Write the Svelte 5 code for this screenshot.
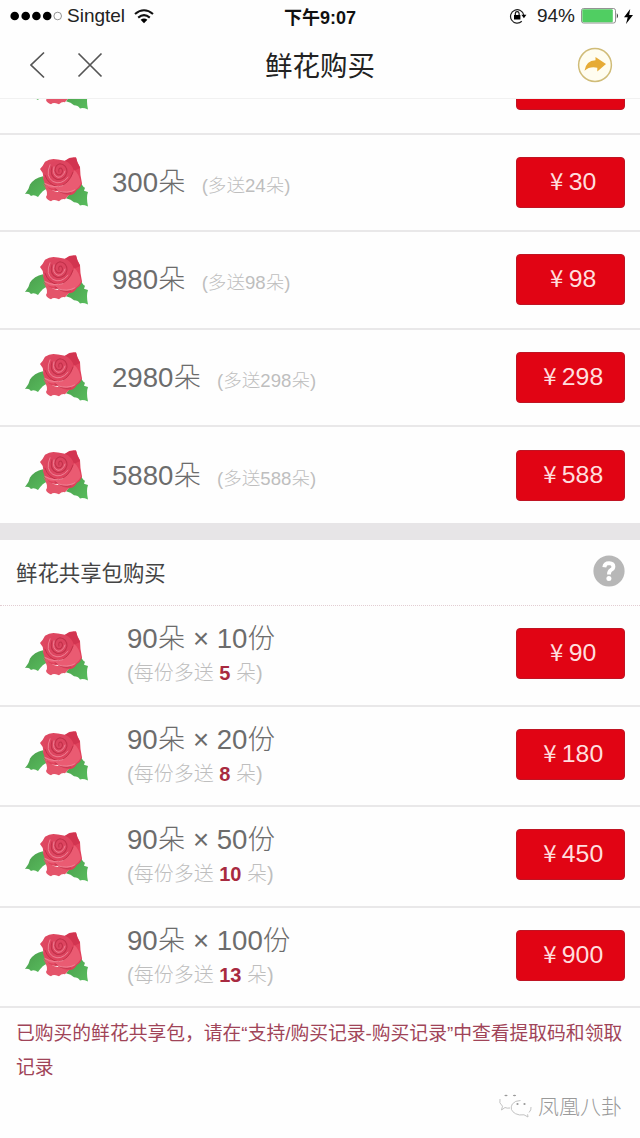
<script>
	const flowers = [
		{ count: 300, extra: 24, price: 30 },
		{ count: 980, extra: 98, price: 98 },
		{ count: 2980, extra: 298, price: 298 },
		{ count: 5880, extra: 588, price: 588 }
	];

	const packs = [
		{ count: 90, shares: 10, extra: 5, price: 90 },
		{ count: 90, shares: 20, extra: 8, price: 180 },
		{ count: 90, shares: 50, extra: 10, price: 450 },
		{ count: 90, shares: 100, extra: 13, price: 900 }
	];
</script>

{#snippet rose()}
	<svg class="rose" viewBox="0 1.5 64 48" preserveAspectRatio="none" width="64" height="50">
		<defs>
			<linearGradient id="petal" x1="0" y1="0" x2="1" y2="1">
				<stop offset="0" stop-color="#dd4a63" />
				<stop offset="1" stop-color="#e23d58" />
			</linearGradient>
			<linearGradient id="leaf" x1="0" y1="0" x2="1" y2="1">
				<stop offset="0" stop-color="#4a9c4c" />
				<stop offset="1" stop-color="#58bd5d" />
			</linearGradient>
		</defs>
		<path fill="url(#leaf)" d="M0 37Q4 33 5 28Q9 22 18 20L22 32Q18 33 13 40Q9 37 6 39Q4 36 0 37Z" />
		<path fill="url(#leaf)" d="M55 24Q58 31 60 31L59 34L63 35Q61 40 63 49Q58 47 55 48Q53 45 49 45Q46 42 41 41L48 33Z" />
		<path
			fill="#e4546a"
			d="M18 27Q24 34 33 35L48 35Q43 38 40 42Q37 41 34 44L31 43Q28 42 26 44Q22 43 21 40Q24 36 18 27Z"
		/>
		<path
			fill="url(#petal)"
			d="M15 13Q18 10 20 6Q26 2 33 4Q38 5 40 5Q45 1 51 2Q52 7 55 11Q55 19 57 27Q55 32 52 33Q49 38 45 38Q38 38 33 34Q23 35 20 28L18 22Q19 17 15 13Z"
		/>
		<path fill="#d23450" d="M40 5Q45 2 51 2Q52 7 55 12L49 15Q47 8 40 5Z" />
		<path fill="#ea5b72" d="M19 26Q29 31 38 28Q47 23 49 14Q54 17 56 27Q53 32 50 33Q47 37 42 37Q34 36 30 32Q22 32 19 26Z" />
		<path fill="#dd4560" d="M21 12Q20 25 33 28Q43 27 47 15Q44 6 36 5Q26 5 21 12Z" />
		<g fill="none" stroke-linecap="round">
			<path stroke="#bd3048" stroke-width=".9" d="M20 19Q23 28 33 30Q44 28 48 16M30 32Q38 38 46 36" />
			<path stroke="#c03049" stroke-width="1" d="M27 11Q24 20 32 23Q40 24 42 16Q42 9 35 8Q30 9 30 15Q32 20 36 18Q39 15 36 12Q33 12 34 16" />
			<path stroke="#f08597" stroke-width=".9" d="M25 9Q20 20 28 25Q36 29 43 21M29 11Q27 19 33 21Q38 21 40 15M20 27Q29 32 38 29M33 34Q42 37 50 33" />
		</g>
	</svg>
{/snippet}

<div class="page">
	<header>
		<div class="status">
			<div class="carrier">
				<svg width="52" height="12" viewBox="0 0 52 12">
					{#each [4.7, 15.7, 26.4, 37.2] as x}
						<circle cx={x} cy="6" r="4.3" />
					{/each}
					<circle cx="47.7" cy="6" r="3.8" fill="none" stroke="#666" stroke-width=".7" />
				</svg>
				<span>Singtel</span>
				<svg class="wifi" width="20" height="15" viewBox="0 0 20 15">
					<g fill="none" stroke="#111" stroke-width="2.1">
						<path d="M1 5Q10 -2.5 19 5" />
						<path d="M4.2 8.6Q10 3.7 15.8 8.6" />
					</g>
					<path d="M6.6 10.8Q10 8 13.4 10.8L10 14.2Z" />
				</svg>
			</div>
			<span class="time">下午9:07</span>
			<div class="power">
				<svg width="18" height="16" viewBox="0 0 18 16">
					<path fill="none" stroke="#222" stroke-width="1.2" d="M12.8 13.3A6.7 6.7 0 1 1 14.8 7" />
					<path d="M12.4 6.8H17.4L14.9 10.2Z" />
					<path d="M5 7H11.4V11.5H5Z" />
					<path fill="none" stroke="#111" stroke-width="1.2" d="M6.3 7V5.5Q6.4 3.7 8.2 3.7T10.1 5.5V7" />
				</svg>
				<span>94%</span>
				<svg width="38" height="16" viewBox="0 0 38 16">
					<rect x=".5" y=".5" width="34" height="14.5" rx="2" fill="#fff" stroke="#777" stroke-width=".8" />
					<rect x="1.3" y="1.3" width="30.5" height="13" rx="1" fill="#50ce62" />
					<path d="M35.8 5Q38 7.8 35.8 10.5Z" fill="#222" />
				</svg>
				<svg class="bolt" width="9" height="15" viewBox="0 0 9 15">
					<path d="M6.2 0L0 8.2H3.7L2 15L9 6H5.2Z" />
				</svg>
			</div>
		</div>
		<nav>
			<div class="back">
				<svg width="16" height="28" viewBox="0 0 16 28">
					<path d="M14 1.5L1 14L14 26.5" />
				</svg>
				<svg width="26" height="26" viewBox="0 0 26 26">
					<path d="M1.5 1.5L24.5 24.5M24.5 1.5L1.5 24.5" />
				</svg>
			</div>
			<h1>鲜花购买</h1>
			<svg class="share" width="36" height="36" viewBox="0 0 36 36">
				<circle cx="18" cy="18" r="16.4" fill="#fffdf0" stroke="#d0bc78" stroke-width="1.5" />
				<path
					fill="#e6ab36"
					d="M18.5 10L29 17L20.3 24.5V20.8Q13 19 7.5 23.7Q9 13.5 18.5 13.2Z"
				/>
			</svg>
		</nav>
	</header>

	<div class="list">
		<!-- row scrolled under the header -->
		<div class="row">
			{@render rose()}
			<button aria-label="购买"></button>
		</div>
		{#each flowers as item}
			<div class="row">
				{@render rose()}
				<div class="single">
					<span class="count">{item.count}朵</span>
					<span class="extra">(多送{item.extra}朵)</span>
				</div>
				<button><span class="yen">¥</span>{item.price}</button>
			</div>
		{/each}
	</div>

	<div class="divider"></div>

	<div class="section">
		<h2>鲜花共享包购买</h2>
		<svg width="32" height="32" viewBox="0 0 32 32">
			<circle cx="16" cy="16" r="15.6" fill="#b7b7b7" />
			<path fill="none" stroke="#fff" stroke-width="3.9" d="M11.3 12.2Q11.7 8.1 16.1 8.1Q20.5 8.3 20.4 11.8Q20.3 14 17.9 15.1Q15.9 16.2 16 19.5" />
			<circle cx="15.9" cy="23.4" r="2.5" fill="#fff" />
		</svg>
	</div>

	<div class="packs">
		{#each packs as pack}
			<div class="row pack">
				{@render rose()}
				<div class="info">
					<div class="count">{pack.count}朵 × {pack.shares}份</div>
					<div class="each">(每份多送 <b>{pack.extra}</b> 朵)</div>
				</div>
				<button><span class="yen">¥</span>{pack.price}</button>
			</div>
		{/each}
	</div>

	<p class="note">已购买的鲜花共享包，请在“支持/购买记录-购买记录”中查看提取码和领取记录</p>

	<div class="watermark">
		<svg width="34" height="26" viewBox="0 0 34 26">
			<g fill="none" stroke="#bbb" stroke-width=".9">
				<path d="M2 7Q.5 11 4.5 14.2L3.5 18L7 15.5Q9 16.5 12 16" />
				<path d="M22.5 8.5Q17 8.5 14.3 12Q11 18 17.5 21.7Q21 23.6 26 22.8L30 25L29.6 22.3M33 15Q33.5 18 31 20.5" />
			</g>
			<g fill="#999">
				<ellipse cx="8" cy="3.5" rx="1.6" ry=".8" />
				<ellipse cx="16.5" cy="3.5" rx="1.6" ry=".8" />
				<circle cx="19.5" cy="12" r="1.1" />
				<circle cx="26.5" cy="12" r="1.1" />
			</g>
		</svg>
		<span>凤凰八卦</span>
	</div>
</div>

<style>
	:global(body) {
		background: #fefefe;
	}

	.page {
		display: flex;
		flex-direction: column;
		width: 640px;
		height: 1138px;
		overflow: hidden;
		background: #fefefe;
		color: #6c6c6c;
		font-family: 'Liberation Sans', 'Noto Sans CJK SC', sans-serif;
	}

	svg {
		flex: none;
		display: block;
	}

	header {
		flex: none;
		box-sizing: border-box;
		height: 99px;
		border-bottom: 1px solid #f1f1f1;
	}

	.status,
	nav {
		display: grid;
		grid-template-columns: 1fr auto 1fr;
		align-items: center;
	}

	.status {
		height: 32px;
		color: #222;
		font-size: 19px;
	}

	.carrier,
	.power {
		display: flex;
		align-items: center;
	}

	.carrier {
		padding-left: 10px;
		gap: 5px;
	}

	.wifi {
		margin-left: 4px;
	}

	.time {
		color: #111;
		font-size: 18px;
		font-weight: bold;
	}

	.power {
		justify-content: flex-end;
		gap: 6px;
		padding-right: 7px;
	}

	.power span {
		margin-left: 4px;
	}

	.bolt {
		margin-left: -1px;
	}

	nav {
		height: 66px;
	}

	.back {
		display: flex;
		align-items: center;
		gap: 31px;
		padding-left: 30px;
	}

	.back path {
		fill: none;
		stroke: #555;
		stroke-width: 1.7;
	}

	h1 {
		margin: 0;
		padding-top: 3px;
		color: #222;
		font-size: 27.5px;
		font-weight: normal;
		line-height: 40px;
	}

	.share {
		justify-self: end;
		margin-right: 27px;
	}

	.list {
		flex: none;
		display: flex;
		flex-direction: column;
		justify-content: flex-end;
		height: 424px;
		overflow: hidden;
	}

	.row {
		flex: none;
		display: flex;
		align-items: center;
		box-sizing: border-box;
		height: 97.5px;
		padding: 0 15px 0 25px;
		border-bottom: 2px solid #e9e8e9;
	}

	.list .row:last-child {
		height: 96px;
		border-bottom: 0;
	}

	.single {
		display: flex;
		align-items: baseline;
		gap: 16px;
		margin-left: 23px;
		padding-top: 4px;
		line-height: 40px;
	}

	.count {
		font-size: 27.6px;
		font-weight: 300;
	}

	.extra {
		color: #bebebe;
		font-size: 18.6px;
		font-weight: 300;
	}

	button {
		display: flex;
		align-items: baseline;
		justify-content: center;
		box-sizing: border-box;
		width: 109px;
		height: 51px;
		margin-left: auto;
		padding: 7px 0 0;
		border: 1px solid #c01423;
		border-radius: 4px;
		background: #e10414;
		color: #ffdede;
		font-family: inherit;
		font-size: 24.8px;
	}

	.yen {
		width: 24px;
		font-family: 'Noto Sans CJK SC', sans-serif;
		font-size: 24px;
		line-height: 30px;
		text-align: center;
	}

	.divider {
		flex: none;
		height: 17px;
		background: #e7e5e7;
	}

	.section {
		flex: none;
		display: flex;
		align-items: center;
		justify-content: space-between;
		box-sizing: border-box;
		height: 66px;
		padding: 0 15px 3px 16px;
		border-bottom: 1px dotted #e2cdd2;
	}

	h2 {
		margin: 0;
		color: #444;
		font-size: 21.4px;
		font-weight: normal;
	}

	.pack {
		height: 100.5px;
		padding-bottom: 3px;
	}

	.pack .rose {
		margin-top: 4px;
	}

	.info {
		margin-left: 38px;
		padding-top: 3px;
	}

	.pack .count {
		line-height: 36px;
	}

	.each {
		color: #bebebe;
		font-size: 20px;
		font-weight: 300;
		line-height: 32px;
	}

	.each b {
		color: #a82a40;
		font-weight: bold;
	}

	.note {
		flex: none;
		margin: 9px 14px 0 16px;
		color: #a04458;
		font-size: 18.8px;
		line-height: 34px;
	}

	.watermark {
		display: flex;
		align-items: center;
		justify-content: flex-end;
		gap: 6px;
		margin-top: auto;
		padding: 0 18px 18px 0;
		color: #999;
		font-size: 21px;
		font-weight: 300;
	}
</style>
